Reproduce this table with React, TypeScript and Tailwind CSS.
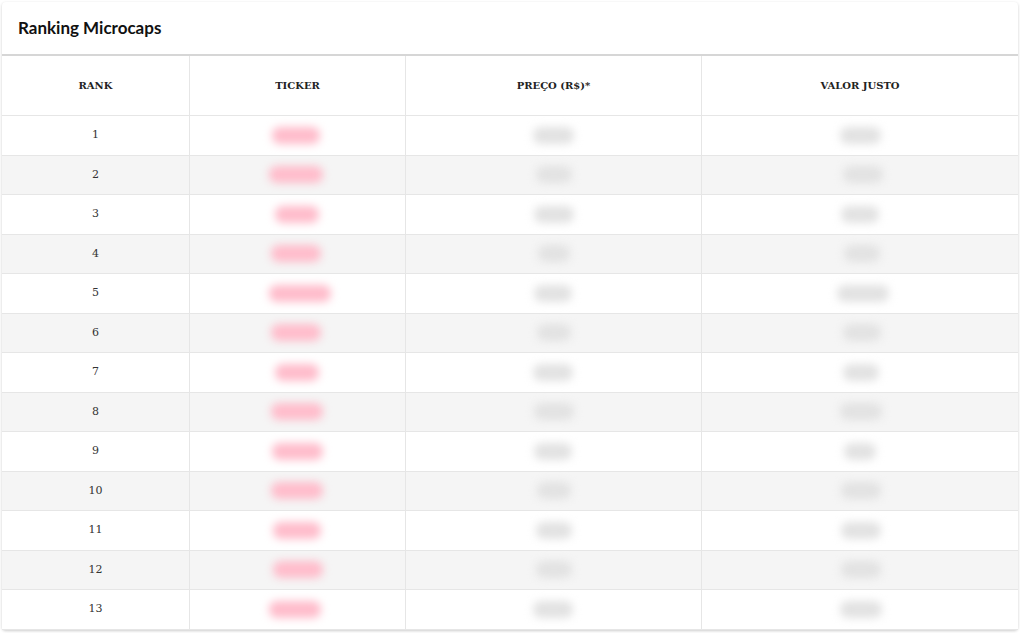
import React from 'react'

const rows = [
  { rank: 1, t: [271, 48], p: [532, 41], v: [839, 41] },
  { rank: 2, t: [268, 54], p: [535, 36], v: [842, 40] },
  { rank: 3, t: [274, 44], p: [533, 40], v: [840, 38] },
  { rank: 4, t: [270, 50], p: [537, 32], v: [843, 36] },
  { rank: 5, t: [268, 62], p: [533, 38], v: [836, 52] },
  { rank: 6, t: [270, 50], p: [536, 34], v: [842, 38] },
  { rank: 7, t: [274, 44], p: [532, 40], v: [842, 36] },
  { rank: 8, t: [270, 52], p: [533, 40], v: [839, 42] },
  { rank: 9, t: [271, 51], p: [533, 38], v: [843, 32] },
  { rank: 10, t: [270, 52], p: [536, 34], v: [840, 40] },
  { rank: 11, t: [272, 48], p: [535, 36], v: [840, 40] },
  { rank: 12, t: [272, 50], p: [535, 36], v: [840, 40] },
  { rank: 13, t: [268, 52], p: [532, 40], v: [839, 42] },
]

const cols = ['RANK', 'TICKER', 'PREÇO (R$)*', 'VALOR JUSTO']

function Blur({ left, width, pink }: { left: number; width: number; pink?: boolean }) {
  return (
    <div className="flex h-full items-center" style={{ paddingLeft: left }}>
      <div
        className={`h-[17px] rounded-lg blur-[4px] ${pink ? 'bg-[#ffbccb]' : 'bg-[#e2e2e2]'}`}
        style={{ width }}
      />
    </div>
  )
}

export default function App() {
  return (
    <div className="min-h-screen bg-white pt-[2px] px-[2px]" style={{ fontFamily: '"DejaVu Serif", serif' }}>
      <div className="bg-white rounded-sm shadow-[0_1px_3px_rgba(0,0,0,0.2)]">
        <div className="h-[54px] flex items-center px-4 border-b-2 border-[#d6d6d6]">
          <h1 className="text-[17px] font-bold text-[#111]" style={{ fontFamily: 'Lato, sans-serif' }}>
            Ranking Microcaps
          </h1>
        </div>
        <div className="grid grid-cols-[187px_216px_296px_1fr]">
          {cols.map((c, i) => (
            <div
              key={c}
              className={`h-[60px] flex items-center justify-center text-[10px] font-bold text-[#222] border-b border-[#e6e6e6] ${i > 0 ? 'border-l' : ''}`}
            >
              {c}
            </div>
          ))}
          {rows.map((r, idx) => {
            const bg = idx % 2 === 1 ? 'bg-[#f5f5f5]' : 'bg-white'
            return (
              <React.Fragment key={r.rank}>
                <div className={`h-[39.5px] flex items-center justify-center text-[11px] text-[#333] border-b border-[#e6e6e6] ${bg}`}>
                  {r.rank}
                </div>
                <div className={`h-[39.5px] border-b border-l border-[#e6e6e6] ${bg}`}>
                  <Blur left={r.t[0] - 2 - 187} width={r.t[1]} pink />
                </div>
                <div className={`h-[39.5px] border-b border-l border-[#e6e6e6] ${bg}`}>
                  <Blur left={r.p[0] - 2 - 403} width={r.p[1]} />
                </div>
                <div className={`h-[39.5px] border-b border-l border-[#e6e6e6] ${bg}`}>
                  <Blur left={r.v[0] - 2 - 699} width={r.v[1]} />
                </div>
              </React.Fragment>
            )
          })}
        </div>
      </div>
    </div>
  )
}
